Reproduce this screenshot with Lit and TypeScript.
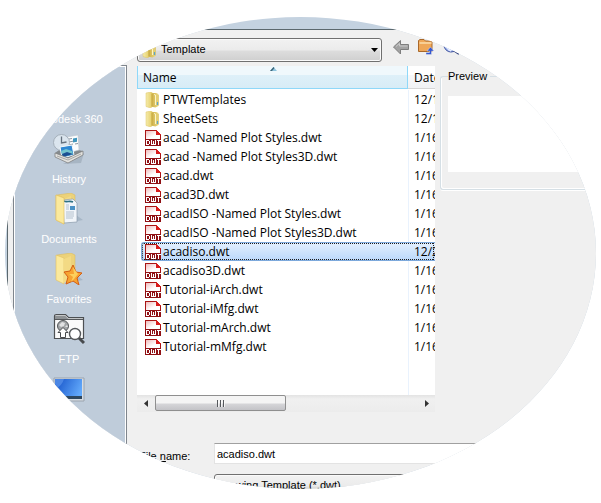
import { LitElement, html, css, svg, nothing } from "lit";
import { customElement, property } from "lit/decorators.js";

interface FileEntry {
  name: string;
  date: string;
  kind: "folder" | "dwt";
  selected?: boolean;
}

const FILES: FileEntry[] = [
  { name: "PTWTemplates", date: "12/1", kind: "folder" },
  { name: "SheetSets", date: "12/1", kind: "folder" },
  { name: "acad -Named Plot Styles.dwt", date: "1/16", kind: "dwt" },
  { name: "acad -Named Plot Styles3D.dwt", date: "1/16", kind: "dwt" },
  { name: "acad.dwt", date: "1/16", kind: "dwt" },
  { name: "acad3D.dwt", date: "1/16", kind: "dwt" },
  { name: "acadISO -Named Plot Styles.dwt", date: "1/16", kind: "dwt" },
  { name: "acadISO -Named Plot Styles3D.dwt", date: "1/16", kind: "dwt" },
  { name: "acadiso.dwt", date: "12/2", kind: "dwt", selected: true },
  { name: "acadiso3D.dwt", date: "1/16", kind: "dwt" },
  { name: "Tutorial-iArch.dwt", date: "1/16", kind: "dwt" },
  { name: "Tutorial-iMfg.dwt", date: "1/16", kind: "dwt" },
  { name: "Tutorial-mArch.dwt", date: "1/16", kind: "dwt" },
  { name: "Tutorial-mMfg.dwt", date: "1/16", kind: "dwt" },
];

const folderIcon = html`<svg width="16" height="16" viewBox="0 0 16 16" aria-hidden="true">
  <defs>
    <linearGradient id="ff" x1="0" x2="1"><stop offset="0" stop-color="#f6ecab" /><stop offset="1" stop-color="#e3cb62" /></linearGradient>
    <linearGradient id="fb" x1="0" x2="1"><stop offset="0" stop-color="#c9a93c" /><stop offset="1" stop-color="#ecd983" /></linearGradient>
  </defs>
  <path d="M6 1h5l2.500 1v12l-3 1.500-5-1z" fill="url(#fb)" />
  <path d="M1 1l5-1 1.500 1v13.500l-2 1.500-4.500-1.500z" fill="url(#ff)" stroke="#dcc566" stroke-width=".5" />
  <path d="M7 1.500v13" stroke="#b8982f" stroke-width=".8" />
  <path d="M9 2.500l1.500 .5v10" stroke="#fbf5c8" fill="none" />
  <path d="M12.500 10v3" stroke="#4aa5dc" stroke-width="1.200" />
  <path d="M13.300 3v10.500" stroke="#d0b64e" stroke-width=".7" />
</svg>`;

const dwtIcon = html`<svg width="16" height="16" viewBox="0 0 16 16" shape-rendering="crispEdges" aria-hidden="true">
  <defs><linearGradient id="pg" x1="0" y1="0" x2="1" y2="1"><stop offset="0" stop-color="#f0bcbc" /><stop offset=".6" stop-color="#fff" /></linearGradient></defs>
  <path d="M0 0h11l5 5v11H0z" fill="#a81414" />
  <path d="M1 1h10v4h4v4H1z" fill="url(#pg)" />
  <path d="M11 0l5 5h-5z" fill="#d81c1c" />
  <path d="M0 9h16v7H0z" fill="#8f1014" />
  <g fill="none" stroke="#fff">
    <path d="M1.500 10v5M1 10.500h3M1 14.500h3M4.500 11v3" />
    <path d="M6.500 10v5M8.500 11v4M10.500 10v5M6 14.500h4" />
    <path d="M12 10.500h4M13.500 10v5" />
  </g>
</svg>`;

const openFolder = svg`
  <path d="M14 30l16-3-7-5z" fill="#8fa2b3" opacity=".5" />
  <path d="M4 2l14-2 4 2v22l-8 3z" fill="#ecd27a" stroke="#d8b85a" stroke-width=".5" />
  <path d="M3 2l8 3v26l-8-4z" fill="#fbe99c" stroke="#e0c05f" stroke-width=".6" />
  <path d="M11 6l7-3v22l-7 5z" fill="#f3da84" />`;

const PLACES = [
  { label: "Autodesk 360", icon: nothing },
  {
    label: "History",
    icon: svg`
      <path d="M10 31l18-1 3-10z" fill="#8f9dab" opacity=".5" />
      <path d="M2 20l8-6 20 4-14 8z" fill="#858a8d" />
      <path d="M14 4l11-2 1 15-11 3z" fill="#fbfcfd" stroke="#bcc6ce" stroke-width=".6" />
      <path d="M16 6l3-.5M16 9l5-1M16 12l4-1M22 11l3-.5" stroke="#8b98a3" />
      <path d="M20 5.500l4-.7v4l-4 .7z" fill="#3f96bd" />
      <circle cx="8.500" cy="9.500" r="8" fill="#dbe5ee" stroke="#a4afba" />
      <path d="M8.500 3.500v6.500l5-1" fill="none" stroke="#64717e" stroke-width="1.300" />
      <path d="M7 14l12-2 2 10-12 3z" fill="#2d87d2" stroke="#f4f9fc" />
      <path d="M8 18l5-2 6 2 1 3-10 3z" fill="#73c4cd" />
      <path d="M9 21l5-2 6 2-10 3z" fill="#1b4f93" />
      <path d="M2 20l13 5 15-7v4l-15 8-13-6z" fill="#e2e2df" stroke="#777" stroke-width=".7" />
      <path d="M4 23l11 4 13-6" fill="none" stroke="#a9a9a7" />`,
  },
  {
    label: "Documents",
    icon: svg`${openFolder}
      <path d="M10 7l10-1 4 4v19l-13 1z" fill="#f1f5fa" stroke="#8b9cac" stroke-width=".7" />
      <path d="M11 8c3 2 5-1 9 1" stroke="#2e7184" fill="none" stroke-width="1.600" />
      <path d="M13 12h3M13 14h3M13 16h3M13 19h8M13 21h8M13 23h8M13 25h7" stroke="#b4c1ce" />
      <path d="M17 13h5v4h-5z" fill="#4a91c5" />
      <path d="M3 2l8 3v26l-8-4z" fill="#fbe99c" stroke="#e0c05f" stroke-width=".6" />`,
  },
  {
    label: "Favorites",
    icon: svg`${openFolder}
      <path d="M20 12l3 7 6 1-5 5 2 7-6-4-7 3 2-7-4-5 6-1z" fill="#f7a331" stroke="#d45e13" />
      <path d="M20 14l1 7-5 0 4 3-2 5 3-3 4-5z" fill="#fedb68" opacity=".8" />`,
  },
  {
    label: "FTP",
    icon: svg`
      <path d="M1.500 25.500v-22q0-2 2-2h9l3 3h15v21z" fill="#fafafa" stroke="#4d5053" stroke-width="1.200" />
      <path d="M2 2.500h10l3 3h15v1H2z" fill="#8d9194" />
      <path d="M2 6.500h28" stroke="#55585b" />
      <circle cx="10" cy="13" r="5.500" fill="#a3a6a8" stroke="#55585b" />
      <path d="M6 12l3-3 3 1-1 3-3 1zM12 14l2-2 1 2z" fill="#e1e2e3" />
      <path d="M10 14.500l5 5h-2.500v5h-5v-5H5z" fill="#fff" stroke="#484b4e" />
      <circle cx="22" cy="21" r="5.500" fill="#fff" stroke="#55585b" stroke-width="1.400" />
      <path d="M26 25l5 5" stroke="#484b4e" stroke-width="3" />`,
  },
  {
    label: "Desktop",
    icon: svg`
      <defs><linearGradient id="dg" x1="0" y1=".3" x2="1" y2=".6"><stop offset="0" stop-color="#1957cb" /><stop offset="1" stop-color="#62a9fb" /></linearGradient></defs>
      <path d="M1 5h30v23H1z" fill="#d7dce2" stroke="#9ba4ae" />
      <path d="M2 6h27v17H2z" fill="url(#dg)" />
      <path d="M2 6h9q-2 7-9 10z" fill="#4b86e4" />
      <path d="M2 23h27v3H2z" fill="#2e475f" />`,
  },
];

@customElement("places-bar")
class PlacesBar extends LitElement {
  static styles = css`
    :host {
      display: block;
      box-sizing: border-box;
      padding: 2px 2px 0 0;
      background: #bfccda;
      border: 1px solid #fff;
      outline: 1px solid #7f858c;
    }
    .place {
      display: flex;
      flex-direction: column;
      align-items: center;
      gap: 7px;
      width: 100%;
      height: 60px;
      margin: 0;
      padding: 4px 0 0;
      border: 0;
      background: none;
      color: #fff;
      font: 11px/14px "Liberation Sans", Arial, sans-serif;
      white-space: nowrap;
    }
    .icon {
      display: block;
      flex: none;
    }
  `;
  render() {
    return html`<nav aria-label="Places">
      ${PLACES.map(
        (p) => html`<button class="place" type="button">
          <svg class="icon" width="32" height="32" viewBox="0 0 32 32" aria-hidden="true">${p.icon}</svg>
          <span>${p.label}</span>
        </button>`,
      )}
    </nav>`;
  }
}

@customElement("file-list")
class FileList extends LitElement {
  @property({ attribute: false }) files: FileEntry[] = [];

  static styles = css`
    :host {
      display: flex;
      flex-direction: column;
      min-width: 0;
      height: 346px;
      overflow: hidden;
      background: #fff;
      color: #000;
      font: 12px/19px "Open Sans", "Noto Sans", sans-serif;
    }
    .table {
      display: flex;
      flex-direction: column;
      flex: 1;
      min-height: 0;
    }
    .row {
      display: grid;
      grid-template-columns: 1fr 27px;
      white-space: nowrap;
    }
    .head {
      height: 24px;
      box-sizing: border-box;
    }
    .name-head,
    .date-head {
      position: relative;
      box-sizing: border-box;
      height: 23px;
      padding: 2px 0 0 6px;
      text-align: left;
      font-weight: 400;
      overflow: hidden;
    }
    .name-head {
      background: linear-gradient(#f0f8fc 0 9px, #def0f9 9px, #d8ecf6);
      border: solid #8fd8f9;
      border-width: 0 1px 1px;
      padding-left: 5px;
    }
    .date-head {
      background: linear-gradient(#fff 0 9px, #f7f8fa 9px, #f1f2f4);
      border-bottom: 1px solid #d5d5d5;
    }
    .sort {
      position: absolute;
      top: 1px;
      left: 50%;
      margin-left: -3px;
    }
    .body {
      display: flex;
      flex-direction: column;
      flex: 1;
      background: linear-gradient(#e9f2fd, #e9f2fd) right 26px top / 1px 100% no-repeat;
    }
    .entry {
      height: 19px;
      margin-left: 4px;
      box-sizing: border-box;
    }
    .entry.selected {
      border: 1px solid #7da9dc;
      border-right: 0;
      border-radius: 3px 0 0 3px;
      background: linear-gradient(#e2effe, #bcd9fb);
      outline: 1px dotted #1c1c1c;
      outline-offset: -2px;
      line-height: 17px;
    }
    .cell {
      display: flex;
      align-items: center;
      gap: 2px;
      padding: 0 0 0 4px;
      overflow: hidden;
    }
    .selected .cell {
      padding-left: 3px;
    }
    .cell.date,
    .selected .cell.date {
      padding-left: 6px;
    }
    .cell svg {
      flex: none;
    }
    .scroll {
      display: flex;
      height: 17px;
      background: linear-gradient(#e3e3e3, #f0f0f0 4px, #ececec);
    }
    .step {
      width: 17px;
      padding: 0;
      border: 0;
      background: none;
      display: grid;
      place-items: center;
    }
    .track {
      flex: 1;
      display: flex;
      padding: 0 1px;
    }
    .thumb {
      box-sizing: border-box;
      width: 50%;
      height: 16px;
      display: grid;
      place-items: center;
      border: 1px solid #8f8f8f;
      border-radius: 2px;
      background: linear-gradient(#f4f4f4 0 7px, #d5d5d8 8px, #c3c3c7);
    }
  `;

  render() {
    return html`
      <table class="table">
        <thead>
          <tr class="row head">
            <th class="name-head" scope="col">
              Name
              <svg class="sort" width="7" height="4" viewBox="0 0 7 4" aria-hidden="true">
                <path d="M0 4l3.500-4L7 4z" fill="#8fc4de" /><path d="M0 4l3.500-4 1 1L2 4z" fill="#3a6478" />
              </svg>
            </th>
            <th class="date-head" scope="col">Date</th>
          </tr>
        </thead>
        <tbody class="body">
          ${this.files.map(
            (f) => html`<tr class="row entry ${f.selected ? "selected" : ""}" aria-selected=${f.selected ? "true" : "false"}>
              <td class="cell">${f.kind === "folder" ? folderIcon : dwtIcon}<span>${f.name}</span></td>
              <td class="cell date">${f.date}</td>
            </tr>`,
          )}
        </tbody>
      </table>
      <div class="scroll">
        <button class="step" type="button" aria-label="Scroll left">
          <svg width="4" height="7" viewBox="0 0 4 7"><path d="M4 0v7L0 3.500z" fill="#333" /></svg>
        </button>
        <div class="track">
          <div class="thumb">
            <svg width="8" height="7" viewBox="0 0 8 7"><path d="M.5 0v7M3.500 0v7M6.500 0v7" stroke="#55585c" /><path d="M1.500 1v6M4.500 1v6M7.500 1v6" stroke="#fff" opacity=".7" /></svg>
          </div>
        </div>
        <button class="step" type="button" aria-label="Scroll right">
          <svg width="4" height="7" viewBox="0 0 4 7"><path d="M0 0v7l4-3.500z" fill="#333" /></svg>
        </button>
      </div>
    `;
  }
}

@customElement("app-root")
class AppRoot extends LitElement {
  static styles = css`
    :host {
      display: flex;
      flex-direction: column;
      box-sizing: border-box;
      min-height: 100vh;
      padding: 17px 5px 14px;
      background: #fff;
      color: #000;
      font: 11px/14px "Liberation Sans", Arial, sans-serif;
    }
    .window {
      flex: 1 0 472px;
      height: 472px;
      box-sizing: border-box;
      display: flex;
      flex-direction: column;
      background: #c4d2e0;
      border-radius: 50%;
      padding-left: 2px;
      overflow: hidden;
    }
    .title {
      flex: none;
      height: 12px;
    }
    .client {
      flex: 1;
      min-height: 0;
      display: grid;
      grid-template-columns: 112px minmax(0, 1fr);
      grid-template-rows: 100%;
      column-gap: 11px;
      padding-left: 6px;
      background: #f0f0f0;
      border: solid #5b686e;
      border-width: 1px 0 0 1px;
    }
    places-bar {
      margin: 36px 0 0;
    }
    .main {
      display: flex;
      flex-direction: column;
      min-width: 0;
    }
    .toolbar {
      flex: none;
      display: grid;
      grid-template-columns: 245fr 214fr;
      height: 28px;
      padding-top: 8px;
    }
    .look-in {
      position: relative;
      height: 24px;
    }
    .look-in svg {
      position: absolute;
      pointer-events: none;
    }
    .folder svg {
      left: 5px;
      top: 4px;
    }
    .look-in .arrow {
      right: 4px;
      top: 10px;
    }
    .combo {
      appearance: none;
      box-sizing: border-box;
      display: block;
      width: 100%;
      height: 24px;
      margin: 0;
      border: 1px solid #707070;
      border-radius: 3px;
      background: linear-gradient(#f2f2f2, #ebebeb 11px, #dddddd 12px, #cfcfcf);
      box-shadow: inset 0 0 0 1px #fafafa;
      color: #000;
      font: inherit;
      padding: 0 20px 2px 23px;
    }
    .combo.plain {
      padding-left: 3px;
    }
    .tools {
      display: flex;
      gap: 9px;
      padding-left: 11px;
    }
    .tool {
      width: 16px;
      height: 18px;
      padding: 0;
      border: 0;
      background: none;
    }
    .tool svg {
      display: block;
      overflow: visible;
    }
    .content {
      display: grid;
      grid-template-columns: minmax(0, 298fr) minmax(0, 156fr);
      column-gap: 5px;
      align-items: start;
    }
    .preview {
      min-width: 0;
      margin: 3px 0 0;
      padding: 13px 0 17px 7px;
      border: 1px solid #d5dfe5;
      border-right: 0;
      border-radius: 3px 0 0 3px;
      box-shadow: inset 1px -1px 0 #fff, 0 1px 0 #fff;
    }
    .preview legend {
      padding: 0 3px 0 0;
    }
    .pane {
      height: 76px;
      background: #fff;
    }
    .form {
      display: grid;
      grid-template-columns: 75px minmax(0, 1fr);
      grid-auto-rows: 21px;
      row-gap: 10px;
      margin-top: 31px;
      padding: 0 0 5px 2px;
    }
    .form label {
      padding-top: 6px;
    }
    .field {
      box-sizing: border-box;
      width: 100%;
      height: 21px;
      margin: 0;
      padding: 0 2px;
      border: solid #e3e3e3;
      border-width: 1px;
      border-top-color: #a0a0a0;
      background: #fff;
      color: #000;
      font: inherit;
    }
    .u {
      text-decoration: underline;
    }
  `;

  render() {
    return html`
      <div class="window">
        <div class="title"></div>
        <div class="client">
          <places-bar></places-bar>
          <main class="main">
            <div class="toolbar">
              <div class="look-in">
                <select class="combo" aria-label="Look in">
                  <option>Template</option>
                </select>
                <span class="folder">${folderIcon}</span>
                <svg class="arrow" width="7" height="4" viewBox="0 0 7 4" aria-hidden="true"><path d="M0 0h7L3.500 4z" fill="#000" /></svg>
              </div>
              <div class="tools">
                <button class="tool" type="button" aria-label="Back">
                  <svg width="16" height="18" viewBox="0 0 16 18">
                    <path d="M.5 9L7.500 2.500v4H15.500v5H7.500v4.500z" fill="#a3a3a3" stroke="#7e7e7e" />
                    <path d="M3 8.500l3.500-3v2.500h8" stroke="#c9c9c9" fill="none" />
                  </svg>
                </button>
                <button class="tool" type="button" aria-label="Up one level">
                  <svg width="16" height="18" viewBox="0 0 16 18">
                    <path d="M.5 13.500v-11L2 1.500h4l1.500 1.500H13l1 1v9.500z" fill="#efa758" stroke="#a9682a" />
                    <path d="M1.500 5h12" stroke="#fbdcab" stroke-width="1.400" />
                    <path d="M8 16.500h5.500V13H16l-3.500-4L9 13h2.500v1.500H8z" fill="#3658cf" stroke="#f0f0f0" stroke-width=".4" />
                  </svg>
                </button>
                <button class="tool" type="button" aria-label="Search the Web">
                  <svg width="16" height="18" viewBox="0 0 16 18">
                    <circle cx="8" cy="7" r="7" fill="#a9bdf0" stroke="#3c4f9e" />
                    <path d="M2 6q3 5 6 7" stroke="#eaf0ff" stroke-width="2" fill="none" />
                    <path d="M10 12l6 4" stroke="#233474" stroke-width="2" />
                  </svg>
                </button>
              </div>
            </div>
            <div class="content">
              <file-list .files=${FILES}></file-list>
              <fieldset class="preview">
                <legend>Preview</legend>
                <div class="pane"></div>
              </fieldset>
            </div>
            <form class="form">
              <label for="name">File <span class="u">n</span>ame:</label>
              <input class="field" id="name" type="text" .value=${"acadiso.dwt"} />
              <span></span>
              <select class="combo plain" id="type" aria-label="Files of type">
                <option>Drawing Template (*.dwt)</option>
              </select>
            </form>
          </main>
        </div>
      </div>
    `;
  }
}
